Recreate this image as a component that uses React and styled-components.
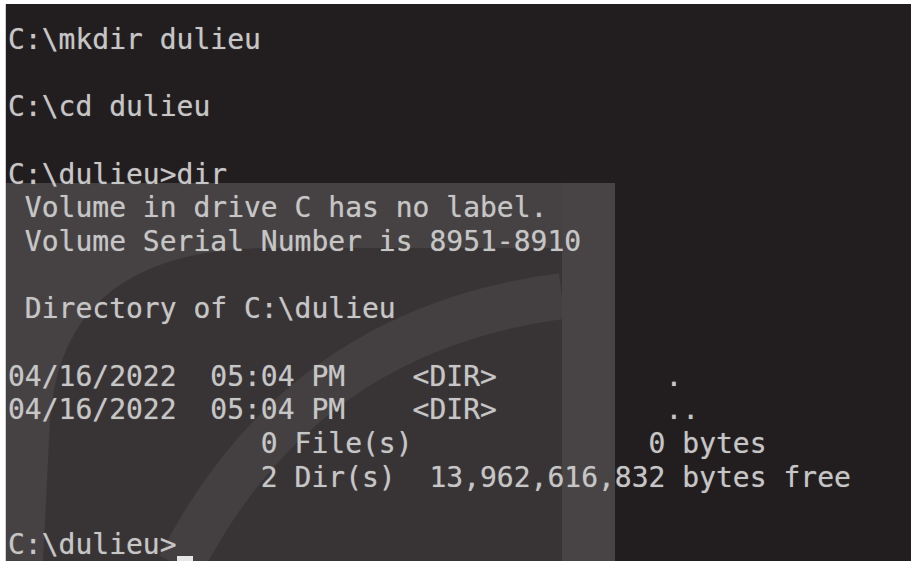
import React from "react";
import styled, { createGlobalStyle } from "styled-components";

const Global = createGlobalStyle`
  html, body { margin: 0; padding: 0; background: #ffffff; }
  body { width: 915px; height: 566px; overflow: hidden; }
`;

const Frame = styled.div`
  box-sizing: border-box;
  width: 915px;
  height: 566px;
  padding: 4px 4px 5px 5px;
  background: #ffffff;
`;

const Terminal = styled.div`
  position: relative;
  height: 100%;
  background: #221e1f;
  border-left: 1px solid #cfcfcf;
  overflow: hidden;
`;

const Watermark = styled.svg`
  position: absolute;
  left: 0;
  top: 179px;
  width: 609px;
  height: 378px;
  z-index: 0;
`;

const Screen = styled.pre`
  position: relative;
  z-index: 1;
  margin: 0;
  padding: 19px 0 0 2px;
  font-family: "DejaVu Sans Mono", "Liberation Mono", monospace;
  font-size: 28px;
  line-height: 33.67px;
  color: #c6c6c6;
  text-shadow: 0 0 1px rgba(200, 200, 200, 0.55);
  white-space: pre;
`;

const Line = styled.div`
  height: 33.67px;
`;

const Cursor = styled.span`
  display: inline-block;
  width: 16px;
  height: 5px;
  background: #e6e6e6;
  vertical-align: -7px;
`;

const lines = [
  "C:\\mkdir dulieu",
  "",
  "C:\\cd dulieu",
  "",
  "C:\\dulieu>dir",
  " Volume in drive C has no label.",
  " Volume Serial Number is 8951-8910",
  "",
  " Directory of C:\\dulieu",
  "",
  "04/16/2022  05:04 PM    <DIR>          .",
  "04/16/2022  05:04 PM    <DIR>          ..",
  "               0 File(s)              0 bytes",
  "               2 Dir(s)  13,962,616,832 bytes free",
  "",
];

export default function App() {
  return (
    <>
      <Global />
      <Frame>
        <Terminal>
          <Watermark viewBox="6 183 609 378" preserveAspectRatio="none">
            <rect x="6" y="183" width="609" height="378" fill="#464243" />
            <path
              d="M 43 561 L 50 420 Q 62 252 262 248 L 562 248 L 562 561 Z"
              fill="#383435"
            />
            <path
              d="M 180 566 Q 300 330 562 296"
              fill="none"
              stroke="#444041"
              strokeWidth="46"
            />
            <rect x="562" y="183" width="53" height="378" fill="#484445" />
          </Watermark>
          <Screen>
            {lines.map((l, i) => (
              <Line key={i}>{l}</Line>
            ))}
            <Line>
              {"C:\\dulieu>"}
              <Cursor />
            </Line>
          </Screen>
        </Terminal>
      </Frame>
    </>
  );
}
